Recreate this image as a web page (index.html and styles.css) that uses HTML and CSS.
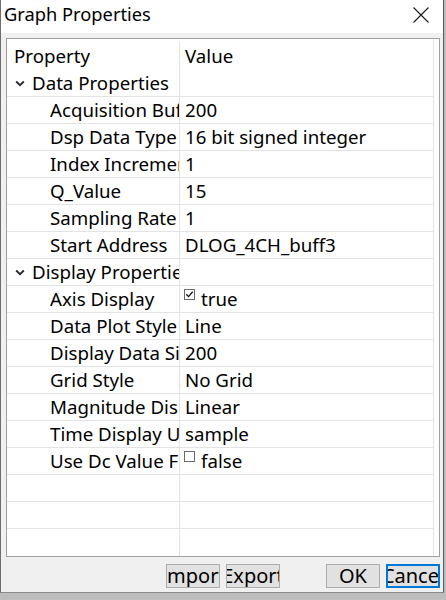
FILE: index.html
```html
<!DOCTYPE html>
<html>
<head>
<meta charset="utf-8">
<link rel="stylesheet" href="styles.css">
</head>
<body>
<div class="window">
  <div class="titlebar">
    <span class="title">Graph Properties</span>
    <svg class="close" width="16" height="16" viewBox="0 0 16 16"><path d="M0.5 0.5 L15.5 15.5 M15.5 0.5 L0.5 15.5" stroke="#1a1a1a" stroke-width="1.1" fill="none"/></svg>
  </div>
  <div class="client">
    <div class="grid">
      <div class="rows">
        <div class="row head"><div class="name">Property</div><div class="value">Value</div></div>
        <div class="row cat"><div class="name"><svg class="chev" width="10" height="7" viewBox="0 0 10 7"><path d="M1.2 1.5 L5 5.2 L8.8 1.5" stroke="#2a2a2a" stroke-width="1.9" fill="none"/></svg>Data Properties</div><div class="value"></div></div>
        <div class="row"><div class="name child">Acquisition Buffer</div><div class="value">200</div></div>
        <div class="row"><div class="name child">Dsp Data Type</div><div class="value">16 bit signed integer</div></div>
        <div class="row"><div class="name child">Index Increment</div><div class="value">1</div></div>
        <div class="row"><div class="name child">Q_Value</div><div class="value">15</div></div>
        <div class="row"><div class="name child">Sampling Rate</div><div class="value">1</div></div>
        <div class="row"><div class="name child">Start Address</div><div class="value">DLOG_4CH_buff3</div></div>
        <div class="row cat"><div class="name"><svg class="chev" width="10" height="7" viewBox="0 0 10 7"><path d="M1.2 1.5 L5 5.2 L8.8 1.5" stroke="#2a2a2a" stroke-width="1.9" fill="none"/></svg>Display Properties</div><div class="value"></div></div>
        <div class="row"><div class="name child">Axis Display</div><div class="value"><svg class="check" width="11" height="11" viewBox="0 0 11 11"><rect x="0.5" y="0.5" width="10" height="10" fill="#fff" stroke="#6a6a6a"/><path d="M2.3 5.2 L4.5 7.6 L8.7 2.8" stroke="#111" stroke-width="1.3" fill="none"/></svg>true</div></div>
        <div class="row"><div class="name child">Data Plot Style</div><div class="value">Line</div></div>
        <div class="row"><div class="name child">Display Data Size</div><div class="value">200</div></div>
        <div class="row"><div class="name child">Grid Style</div><div class="value">No Grid</div></div>
        <div class="row"><div class="name child">Magnitude Display</div><div class="value">Linear</div></div>
        <div class="row"><div class="name child">Time Display Unit</div><div class="value">sample</div></div>
        <div class="row"><div class="name child">Use Dc Value For Graph</div><div class="value"><svg class="check" width="11" height="11" viewBox="0 0 11 11"><rect x="0.5" y="0.5" width="10" height="10" fill="#fff" stroke="#6a6a6a"/></svg>false</div></div>
        <div class="row"><div class="name"></div><div class="value"></div></div>
        <div class="row"><div class="name"></div><div class="value"></div></div>
        <div class="row last"><div class="name"></div><div class="value"></div></div>
      </div>
    </div>
    <div class="buttons">
      <button class="btn">Import</button>
      <button class="btn">Export</button>
      <button class="btn ok">OK</button>
      <button class="btn focus">Cancel</button>
    </div>
  </div>
</div>
</body>
</html>
```
FILE: styles.css
```css
html, body {
  margin: 0;
  padding: 0;
}
body {
  background: #bdbdbd;
  font-family: "Noto Sans", "Open Sans", sans-serif;
  font-size: 18.7px;
  color: #000;
}
.window {
  width: 444px;
  height: 593px;
  box-sizing: border-box;
  background: #f0f0f0;
  border-left: 1px solid #6e6e6e;
  border-right: 1px solid #5a5a5a;
  border-bottom: 1px solid #8a8a8a;
  display: flex;
  flex-direction: column;
}
.titlebar {
  height: 33px;
  flex: none;
  background: #fff;
  display: flex;
  align-items: flex-start;
  justify-content: space-between;
  padding-left: 3px;
}
.title {
  margin-top: 2px;
  line-height: 24px;
  font-size: 18.3px;
}
.close {
  margin-top: 7px;
  margin-right: 14px;
}
.client {
  padding: 5px 0 0 5px;
}
.grid {
  width: 434px;
  height: 519px;
  box-sizing: border-box;
  border: 1px solid #a0a0a0;
  background: #fff;
  display: flex;
}
.rows {
  width: 427px;
  box-sizing: border-box;
  border-right: 1px solid #e3e3e3;
  display: flex;
  flex-direction: column;
}
.row {
  height: 27px;
  flex: none;
  box-sizing: border-box;
  border-bottom: 1px solid #e3e3e3;
  display: flex;
  line-height: 25px;
}
.row.head {
  height: 31px;
  border-bottom: none;
  padding-top: 3px;
}
.row.last {
  flex: 1;
  border-bottom: none;
}
.name {
  width: 173px;
  flex: none;
  box-sizing: border-box;
  border-right: 1px solid #e3e3e3;
  padding-left: 7px;
  padding-bottom: 1px;
  white-space: nowrap;
  overflow: hidden;
  display: flex;
  align-items: center;
}
.name.child {
  padding-left: 43px;
}
.chev {
  flex: none;
  margin-left: 8px;
  margin-right: 7px;
  margin-top: 2px;
}
.cat .name {
  padding-left: 0;
}
.value {
  flex: 1;
  padding-left: 5px;
  padding-bottom: 1px;
  white-space: nowrap;
  overflow: hidden;
  display: flex;
  align-items: center;
}
.check {
  flex: none;
  align-self: flex-start;
  margin-top: 3px;
  margin-left: -1px;
  margin-right: 6px;
}
.buttons {
  display: flex;
  width: 434px;
  justify-content: flex-end;
  margin-top: 7px;
  gap: 6px;
}
.btn {
  width: 54px;
  height: 24px;
  box-sizing: border-box;
  padding: 0;
  margin: 0;
  border: 1px solid #adadad;
  background: #e1e1e1;
  font-family: "Noto Sans", "Open Sans", sans-serif;
  font-size: 20px;
  line-height: 22px;
  color: #000;
  display: flex;
  justify-content: center;
  align-items: center;
  overflow: hidden;
  white-space: nowrap;
}
.btn.ok {
  margin-left: 40px;
}
.btn.focus {
  border: 2px solid #0078d7;
}
```
